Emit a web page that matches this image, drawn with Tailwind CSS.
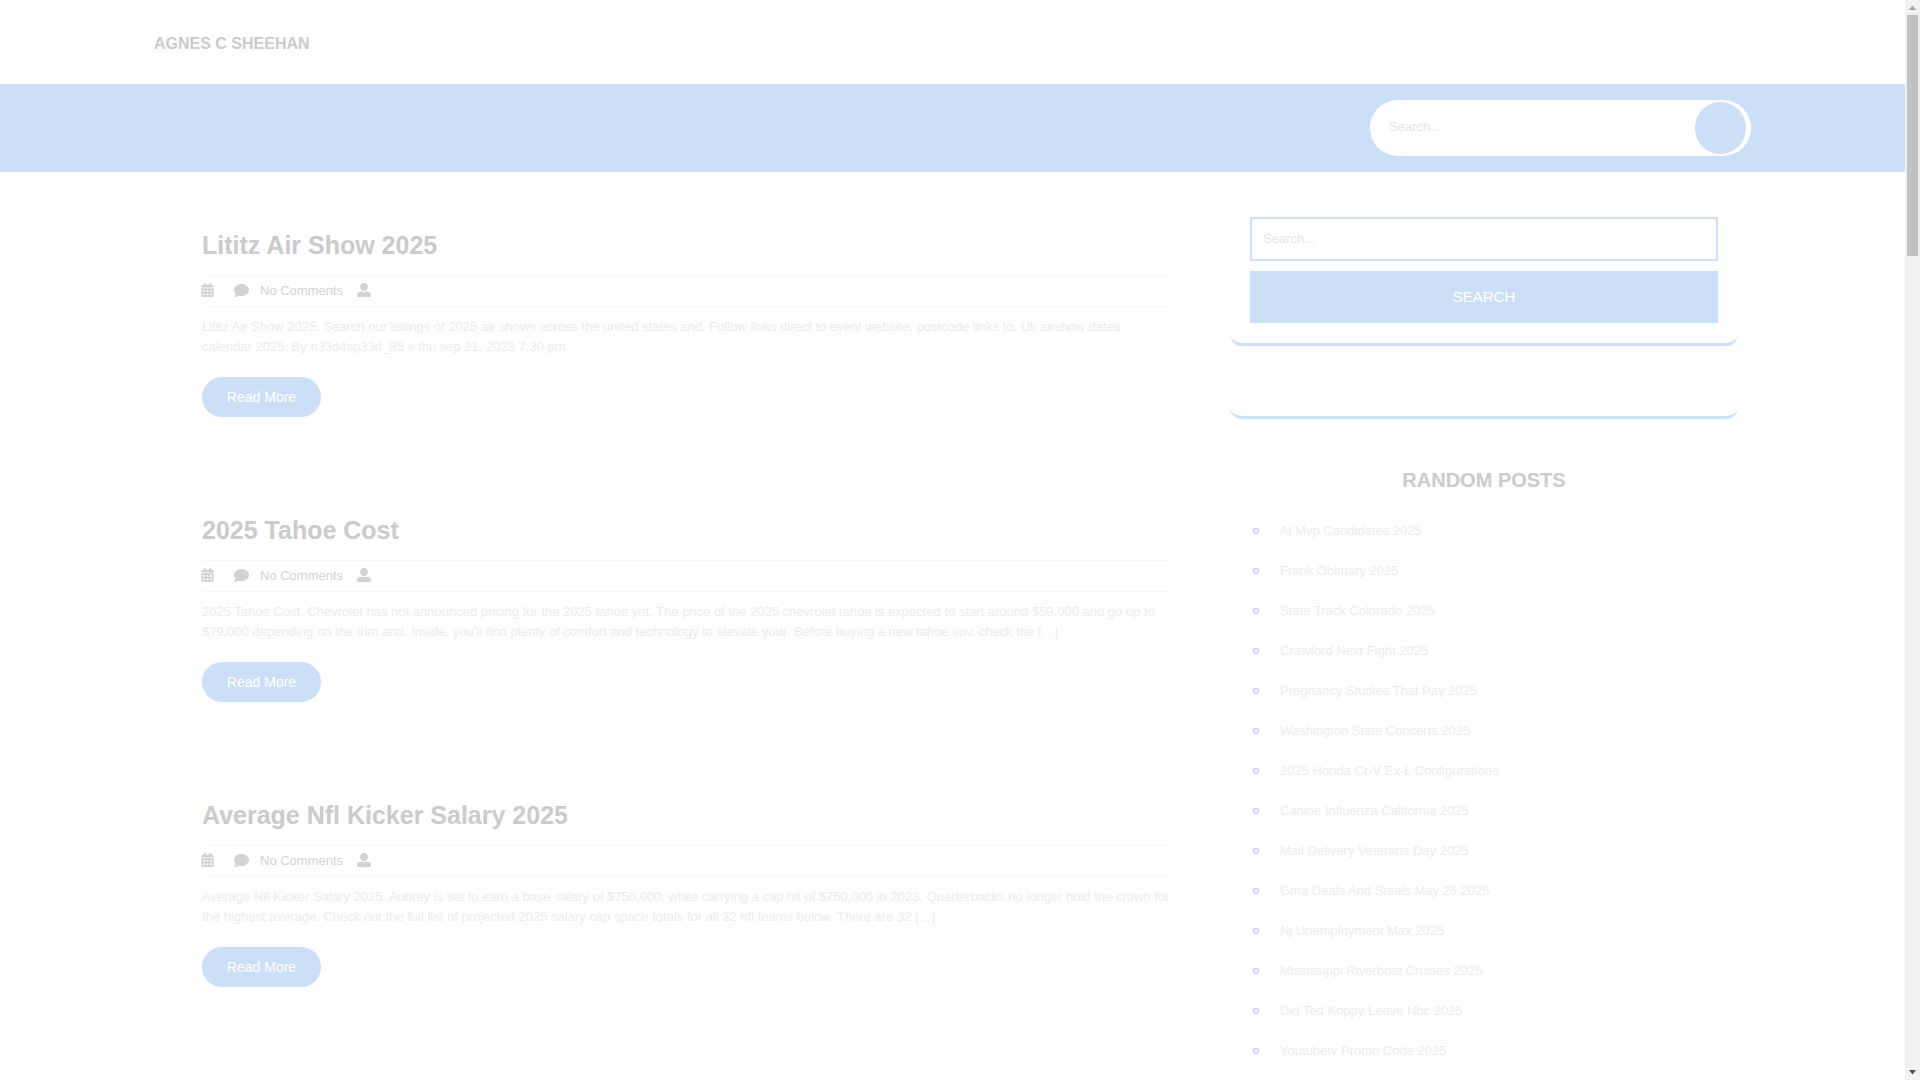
<!DOCTYPE html>
<html lang="en">
<head>
    <meta charset="UTF-8">
    <meta name="viewport" content="width=device-width, initial-scale=1.0">
    <title>Agnes C Sheehan</title>
    <script src="https://cdn.jsdelivr.net/npm/@tailwindcss/browser@4"></script>
</head>
<body class="flex h-screen overflow-hidden bg-[#fefefe] font-['Liberation_Sans',Arial,sans-serif] text-[13px] leading-5 text-[#ececec]">
    <!-- Icons -->
    <svg class="hidden" aria-hidden="true">
        <symbol id="calendar" viewBox="0 0 448 512"><path fill="currentColor" fill-rule="evenodd" d="M0 464c0 26.5 21.5 48 48 48h352c26.500 0 48-21.500 48-48V192H0v272zM320 268c0-6.600 5.400-12 12-12h40c6.600 0 12 5.400 12 12v40c0 6.600-5.400 12-12 12h-40c-6.600 0-12-5.400-12-12v-40zm0 128c0-6.600 5.400-12 12-12h40c6.600 0 12 5.400 12 12v40c0 6.600-5.400 12-12 12h-40c-6.600 0-12-5.400-12-12v-40zM192 268c0-6.600 5.400-12 12-12h40c6.600 0 12 5.400 12 12v40c0 6.600-5.400 12-12 12h-40c-6.600 0-12-5.400-12-12v-40zm0 128c0-6.600 5.400-12 12-12h40c6.600 0 12 5.400 12 12v40c0 6.600-5.400 12-12 12h-40c-6.600 0-12-5.400-12-12v-40zM64 268c0-6.600 5.400-12 12-12h40c6.600 0 12 5.400 12 12v40c0 6.600-5.400 12-12 12H76c-6.600 0-12-5.400-12-12v-40zm0 128c0-6.600 5.400-12 12-12h40c6.600 0 12 5.400 12 12v40c0 6.600-5.400 12-12 12H76c-6.600 0-12-5.400-12-12v-40zM400 64h-48V16c0-8.800-7.200-16-16-16h-32c-8.800 0-16 7.200-16 16v48H160V16c0-8.800-7.200-16-16-16h-32c-8.800 0-16 7.200-16 16v48H48C21.500 64 0 85.500 0 112v48h448v-48c0-26.500-21.500-48-48-48z"/></symbol>
        <symbol id="comment" viewBox="0 0 512 512"><path fill="currentColor" d="M256 32C114.600 32 0 125.100 0 240c0 49.600 21.400 95 57 130.700C44.500 421.100 2.700 466 2.200 466.500c-2.200 2.300-2.800 5.700-1.500 8.700S4.800 480 8 480c66.300 0 116-31.800 140.600-51.400 32.700 12.300 69 19.400 107.400 19.400 141.400 0 256-93.100 256-208S397.400 32 256 32z"/></symbol>
        <symbol id="user" viewBox="0 0 512 512"><path fill="currentColor" d="M256 288c79.500 0 144-64.500 144-144S335.500 0 256 0 112 64.500 112 144s64.500 144 144 144zm128 32h-55.100c-22.200 10.200-46.900 16-72.900 16s-50.600-5.800-72.900-16H128C57.300 320 0 377.300 0 448v16c0 26.500 21.500 48 48 48h416c26.500 0 48-21.500 48-48v-16c0-70.700-57.300-128-128-128z"/></symbol>
    </svg>

    <div class="min-w-0 flex-1">
        <!-- Header -->
        <header>
            <div class="flex h-[84px] items-center px-[154px] pt-[3px]">
                <h1 class="text-base font-bold text-[#cbcbcb]"><a href="#">AGNES C SHEEHAN</a></h1>
            </div>
            <div class="flex justify-end bg-[#cbdff7] px-[154px] py-4">
                <form class="flex h-14 w-[381px] items-center rounded-full bg-[#fefefe] pr-[5px] pl-[19px]">
                    <input type="search" aria-label="Search" placeholder="Search..." class="min-w-0 flex-1 pb-0.5 outline-none placeholder:text-[#e6e6e6]">
                    <button type="submit" aria-label="Search" class="h-13 w-[51px] rounded-full bg-[#cbdff7]"></button>
                </form>
            </div>
        </header>

        <div class="flex items-start gap-6 pr-[167px] pl-[166px] pt-6">
            <!-- Posts -->
            <main class="flex min-w-0 flex-1 flex-col gap-[30px]">
                <article class="rounded-[15px] border border-[#fcfcfc] px-[35px] py-[33px]">
                    <h2 class="text-[25px] leading-[30px] font-bold text-[#cbcbcb]"><a href="#">Lititz Air Show 2025</a></h2>
                    <div class="mt-[15px] flex h-8 items-center border-y border-[#f6f6f6] text-[#d2d2d2]">
                        <svg class="mr-5 mb-0.5 -ml-px h-3.5 w-[13px]"><use href="#calendar"/></svg>
                        <svg class="mr-[11px] mb-0.5 size-[15px]"><use href="#comment"/></svg>
                        <span class="mr-3.5">No Comments</span>
                        <svg class="mb-0.5 size-3.5"><use href="#user"/></svg>
                    </div>
                    <p class="mt-2.5">Lititz Air Show 2025. Search our listings of 2025 air shows across the united states and. Follow links direct to event website, postcode links to. Uk airshow dates calendar 2025. By n33d4sp33d_85 » thu sep 21, 2023 7:30 pm.</p>
                    <a href="#" class="mt-5 flex h-10 w-[119px] items-center justify-center rounded-full bg-[#cbdff7] text-sm text-white">Read More</a>
                </article>

                <article class="rounded-[15px] border border-[#fcfcfc] px-[35px] py-[33px]">
                    <h2 class="text-[25px] leading-[30px] font-bold text-[#cbcbcb]"><a href="#">2025 Tahoe Cost</a></h2>
                    <div class="mt-[15px] flex h-8 items-center border-y border-[#f6f6f6] text-[#d2d2d2]">
                        <svg class="mr-5 mb-0.5 -ml-px h-3.5 w-[13px]"><use href="#calendar"/></svg>
                        <svg class="mr-[11px] mb-0.5 size-[15px]"><use href="#comment"/></svg>
                        <span class="mr-3.5">No Comments</span>
                        <svg class="mb-0.5 size-3.5"><use href="#user"/></svg>
                    </div>
                    <p class="mt-2.5">2025 Tahoe Cost. Chevrolet has not announced pricing for the 2025 tahoe yet. The price of the 2025 chevrolet tahoe is expected to start around $59,000 and go up to $79,000 depending on the trim and. Inside, you’ll find plenty of comfort and technology to elevate your. Before buying a new tahoe suv, check the […]</p>
                    <a href="#" class="mt-5 flex h-10 w-[119px] items-center justify-center rounded-full bg-[#cbdff7] text-sm text-white">Read More</a>
                </article>

                <article class="rounded-[15px] border border-[#fcfcfc] px-[35px] py-[33px]">
                    <h2 class="text-[25px] leading-[30px] font-bold text-[#cbcbcb]"><a href="#">Average Nfl Kicker Salary 2025</a></h2>
                    <div class="mt-[15px] flex h-8 items-center border-y border-[#f6f6f6] text-[#d2d2d2]">
                        <svg class="mr-5 mb-0.5 -ml-px h-3.5 w-[13px]"><use href="#calendar"/></svg>
                        <svg class="mr-[11px] mb-0.5 size-[15px]"><use href="#comment"/></svg>
                        <span class="mr-3.5">No Comments</span>
                        <svg class="mb-0.5 size-3.5"><use href="#user"/></svg>
                    </div>
                    <p class="mt-2.5">Average Nfl Kicker Salary 2025. Aubrey is set to earn a base salary of $750,000, while carrying a cap hit of $750,000 in 2023. Quarterbacks no longer hold the crown for the highest average. Check out the full list of projected 2025 salary cap space totals for all 32 nfl teams below. There are 32 […]</p>
                    <a href="#" class="mt-5 flex h-10 w-[119px] items-center justify-center rounded-full bg-[#cbdff7] text-sm text-white">Read More</a>
                </article>
            </main>

            <!-- Sidebar -->
            <aside class="flex w-[508px] shrink-0 flex-col gap-[30px]">
                <form class="flex flex-col gap-2.5 rounded-xl border-b-3 border-[#cbdff7] px-5 pt-[21px] pb-5 shadow-[0_0_2px_rgb(0_0_0/4%)]">
                    <input type="search" aria-label="Search" placeholder="Search..." class="h-11 border-2 border-[#cbdff7] px-[11px] pb-0.5 outline-none placeholder:text-[#e6e6e6]">
                    <button type="submit" class="h-13 bg-[#cbdff7] text-[15px] text-white">SEARCH</button>
                </form>

                <section class="h-[43px] rounded-xl border-b-3 border-[#cbdff7] shadow-[0_0_2px_rgb(0_0_0/4%)]"></section>

                <section class="rounded-xl border-b-3 border-[#cbdff7] px-5 pt-[21px] pb-5 shadow-[0_0_2px_rgb(0_0_0/4%)]">
                    <h3 class="mb-5 text-center text-xl leading-[21px] font-bold text-[#cbcbcb]">RANDOM POSTS</h3>
                    <ul id="randomPosts"></ul>
                </section>
            </aside>
        </div>
    </div>

    <!-- Scrollbar -->
    <div class="flex w-[15px] shrink-0 flex-col items-center bg-[#f1f1f1]" aria-hidden="true">
        <svg class="h-[15px] w-[15px] shrink-0" viewBox="0 0 15 15"><path fill="#a3a3a3" d="M7.500 5.500L11 10H4z"/></svg>
        <div class="h-[241px] w-[11px] bg-[#c1c1c1]"></div>
        <svg class="mt-auto h-[15px] w-[15px] shrink-0" viewBox="0 0 15 15"><path fill="#505050" d="M4 5h7L7.500 9.500z"/></svg>
    </div>

    <script>
        const posts = [
            "Al Mvp Candidates 2025",
            "Frank Obituary 2025",
            "State Track Colorado 2025",
            "Crawford Next Fight 2025",
            "Pregnancy Studies That Pay 2025",
            "Washington State Concerts 2025",
            "2025 Honda Cr-V Ex-L Configurations",
            "Canine Influenza California 2025",
            "Mail Delivery Veterans Day 2025",
            "Gma Deals And Steals May 25 2025",
            "Nj Unemployment Max 2025",
            "Mississippi Riverboat Cruises 2025",
            "Did Ted Koppy Leave Nbc 2025",
            "Youtubetv Promo Code 2025"
        ];

        // Fill the random posts list
        document.getElementById("randomPosts").innerHTML = posts.map(post => `
            <li class="flex h-10 items-center gap-5 pl-0.5">
                <svg class="size-2" viewBox="0 0 8 8"><circle cx="4" cy="4" r="2.300" fill="none" stroke="#cbdff7" stroke-width="2.200"/></svg>
                <a href="#">${post}</a>
            </li>`).join("");
    </script>
</body>
</html>
